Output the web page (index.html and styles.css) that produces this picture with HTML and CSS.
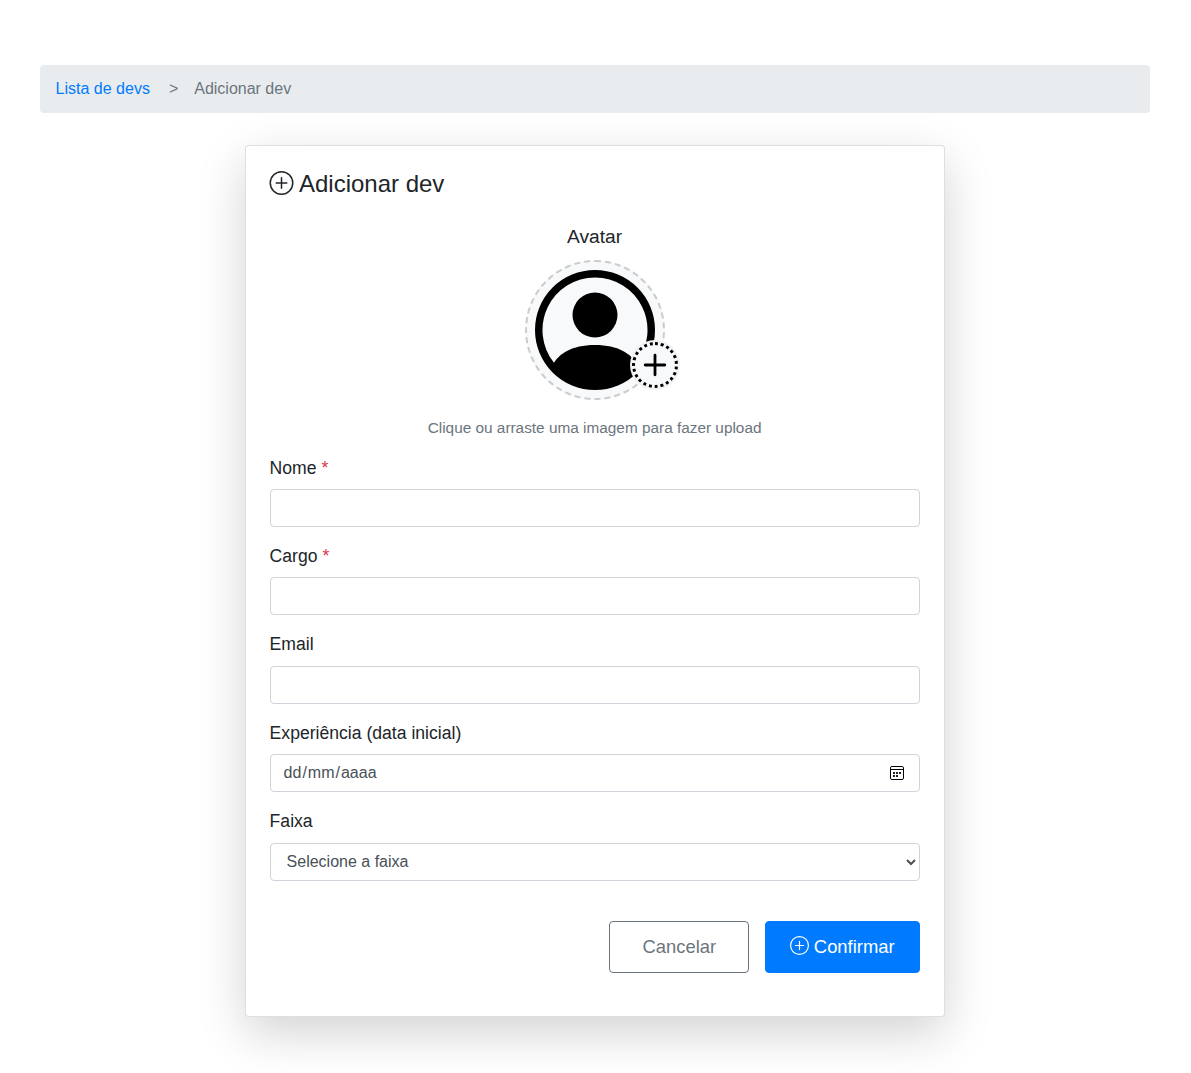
FILE: index.html
```html
<!DOCTYPE html>
<html lang="pt-BR">
<head>
<meta charset="utf-8">
<title>Adicionar dev</title>
<link rel="stylesheet" href="styles.css">
</head>
<body>
<svg class="sprite" aria-hidden="true">
  <symbol id="plus-circle" viewBox="0 0 16 16">
    <path d="M8 15A7 7 0 1 1 8 1a7 7 0 0 1 0 14zm0 1A8 8 0 1 0 8 0a8 8 0 0 0 0 16z"/>
    <path d="M8 4a.5.5 0 0 1 .5.5v3h3a.5.5 0 0 1 0 1h-3v3a.5.5 0 0 1-1 0v-3h-3a.5.5 0 0 1 0-1h3v-3A.5.5 0 0 1 8 4z"/>
  </symbol>
</svg>
<main class="page">
  <nav class="breadcrumb">
    <a href="#">Lista de devs</a>
    <span class="separator">&gt;</span>
    <span>Adicionar dev</span>
  </nav>
  <form class="card">
    <h1 class="title"><svg class="icon"><use href="#plus-circle"/></svg> Adicionar dev</h1>
    <div class="avatar-field">
      <div class="avatar-label">Avatar</div>
      <div class="avatar">
        <svg class="person" viewBox="0 0 16 16">
          <path d="M11 6a3 3 0 1 1-6 0 3 3 0 0 1 6 0z"/>
          <path fill-rule="evenodd" d="M0 8a8 8 0 1 1 16 0A8 8 0 0 1 0 8zm8-7a7 7 0 0 0-5.468 11.37C3.242 11.226 4.805 10 8 10s4.757 1.225 5.468 2.37A7 7 0 0 0 8 1z"/>
        </svg>
        <span class="avatar-add">
          <svg viewBox="0 0 24 24"><path d="M12 2.2v19.6M2.2 12h19.6"/></svg>
        </span>
      </div>
      <p class="hint">Clique ou arraste uma imagem para fazer upload</p>
    </div>
    <div class="group">
      <label for="nome">Nome <span class="required">*</span></label>
      <input class="control" id="nome" type="text">
    </div>
    <div class="group">
      <label for="cargo">Cargo <span class="required">*</span></label>
      <input class="control" id="cargo" type="text">
    </div>
    <div class="group">
      <label for="email">Email</label>
      <input class="control" id="email" type="email">
    </div>
    <div class="group">
      <label>Experiência (data inicial)</label>
      <div class="control date" tabindex="0">
        <div><span>dd</span>/<span>mm</span>/<span>aaaa</span></div>
        <svg class="calendar" viewBox="0 0 14 14">
          <rect x=".5" y=".5" width="13" height="13" rx="1.4"/>
          <path d="M1 3.5h12"/>
          <path class="days" d="M3 6h2v2H3zM6 6h2v2H6zM9 6h2v2H9zM3 9h2v2H3zM6 9h2v2H6z"/>
        </svg>
      </div>
    </div>
    <div class="group">
      <label for="faixa">Faixa</label>
      <select class="control" id="faixa"><option>Selecione a faixa</option></select>
    </div>
    <div class="actions">
      <button class="btn cancel" type="button">Cancelar</button>
      <button class="btn confirm" type="button"><svg class="icon"><use href="#plus-circle"/></svg> Confirmar</button>
    </div>
  </form>
</main>
</body>
</html>
```
FILE: styles.css
```css
*, *::before, *::after { box-sizing: border-box; }
body {
  margin: 0;
  background: #fff;
  color: #212529;
  font: 16px/1.5 "Liberation Sans", Arial, sans-serif;
}
.sprite { display: none; }
.icon {
  width: 1em;
  height: 1em;
  fill: currentColor;
  vertical-align: -.125em;
}
.page { min-height: 100vh; padding: 65px 41.4px 0 39.6px; }
.breadcrumb {
  display: flex;
  margin-bottom: 32px;
  padding: 12px 16px;
  border-radius: 4px;
  background: #e9ecef;
  color: #6c757d;
}
.breadcrumb a { color: #007bff; text-decoration: none; }
.separator { margin: 0 16px 0 19px; }
.card {
  width: 700px;
  height: 872px;
  margin: 0 auto;
  padding: 24px;
  border: 1px solid rgba(0, 0, 0, .125);
  border-radius: 4px;
  background: #fff;
  box-shadow: 0 16px 48px rgba(0, 0, 0, .175);
}
.title { margin: 0 0 24px; font-size: 24px; font-weight: 400; line-height: 28.8px; }
.title .icon { width: 25px; margin: 0 -.4px 0 -.6px; vertical-align: -3px; }
.avatar-field { display: flex; flex-direction: column; align-items: center; }
.avatar-label { margin-bottom: 8px; font-size: 19.2px; line-height: 28.8px; }
.avatar {
  position: relative;
  width: 140px;
  height: 140px;
  padding: 8px;
  border: 2px dashed #ccc;
  border-radius: 50%;
  background: #f8f9fa;
}
.person { display: block; width: 120px; height: 120px; }
.avatar-add {
  position: absolute;
  right: -15px;
  bottom: 10px;
  display: grid;
  place-items: center;
  width: 46px;
  height: 46px;
  border: 3px dotted #000;
  border-radius: 50%;
  background: #f8f9fa;
  box-shadow: 0 0 0 2px #f1f1f1;
}
.avatar-add svg { width: 24px; height: 24px; stroke: #000; stroke-width: 2.8; stroke-linecap: round; }
.hint { margin: 16px 0; color: #6c757d; font-size: 15.36px; line-height: 23.04px; }
.group { margin-bottom: 16px; }
label { display: block; margin-bottom: 8px; font-size: 17.6px; line-height: 26.4px; }
.required { color: #dc3545; }
.control {
  display: block;
  width: 100%;
  height: 38px;
  padding: 6px 12px;
  border: 1px solid #ced4da;
  border-radius: 4px;
  background: #fff;
  color: #495057;
  font: inherit;
}
.date { display: flex; align-items: center; justify-content: space-between; padding-right: 15px; }
.date span { padding: 0 1px; }
.calendar { width: 14px; height: 14px; fill: none; stroke: #000; stroke-width: 1; }
.calendar .days { fill: #222; stroke: none; }
.actions { display: flex; justify-content: flex-end; gap: 16px; padding-top: 24px; }
.btn {
  height: 52px;
  padding: 0 24px;
  border: 1px solid;
  border-radius: 4px;
  font: 18.4px/27.6px "Liberation Sans", Arial, sans-serif;
}
.cancel { width: 140px; border-color: #6c757d; background: #fff; color: #6c757d; }
.confirm { border-color: #007bff; background: #007bff; color: #fff; }
.confirm .icon { width: 19px; height: 19px; margin-right: -.6px; }
```
